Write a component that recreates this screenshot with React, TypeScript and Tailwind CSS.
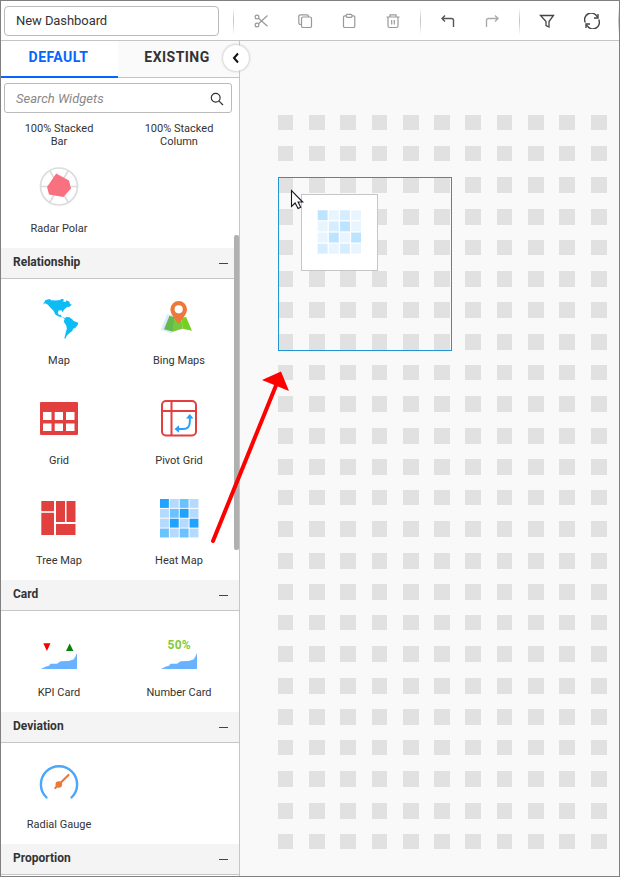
import type { ReactNode } from "react";

const COLUMNS = [
  [278, 15], [309, 16], [340, 16], [372, 15], [403, 16], [434, 16],
  [465, 16], [497, 15], [528, 16], [559, 16], [591, 16],
];
const ROWS = Array.from({ length: 24 }, (_, n) => [
  n === 2 || n === 6 ? Math.floor(115.1 + 31.25 * n) : Math.round(115.1 + 31.25 * n),
  n % 4 === 0 || n === 1 || n === 23 ? 15 : 16,
]);

const HEAT = ["dlml", "lmdl", "ldld", "mlml"];

function HeatCells({ pitch, size, faded = false }: { pitch: number; size: number; faded?: boolean }) {
  const colors: Record<string, string> = faded
    ? { d: "#bce3ff", m: "#d5edff", l: "#e8f5ff" }
    : { d: "#22a2ff", m: "#6ac2ff", l: "#b5daff" };
  return (
    <>
      {HEAT.map((row, y) =>
        row.split("").map((c, x) => (
          <rect key={`${x}-${y}`} x={x * pitch} y={y * pitch} width={size} height={size} fill={colors[c]} />
        ))
      )}
    </>
  );
}

function Icon({ children }: { children: ReactNode }) {
  return (
    <svg width="40" height="40" viewBox="0 0 40 40" fill="none" className="block shrink-0 overflow-visible">
      {children}
    </svg>
  );
}

const Radar = () => (
  <Icon>
    <g stroke="#dcdcdc" strokeWidth="1.7">
      <circle cx="20" cy="19.500" r="18.500" />
      <path d="M1.500 19.500h37M10.700 3.500l18.600 32M29.300 3.500L10.700 35.500" />
    </g>
    <path d="M17.200 6.500L30 13.500l2 8-7.500 8.500-14.500-2.500L8 20z" fill="#f97180" />
  </Icon>
);

const AmericasMap = () => (
  <Icon>
    <path
      transform="translate(0 .5)"
      fill="#0dbcf5"
      d="M4 5l2.500-4.500L11-.4l1 1.200 5 .2 4-.5 2-1.200 2 1-1 1.700 2.500.6 1-1.800 3 1.400.4 2.200 2 .8-2.500 2-2.400.3-3 2.700-1.400 2.600-1-2-3 .2-.8 2.500 1.200 1.900 2.300-.4-.5 1.500 2 1.300 2.200.6 1.500-.9 3 .2 3.200 2.500 1 1.300 4.500 1.800-.5 2.200-2.500 3-2 .8-1 2.300-2.500 2-2.800 2.500-1.700 3.400-.8-1 1.500-6 1-3.500-.9-3.500-2.300-3.200 1-3-2.500-1.500-3.500-.8-3.200-1.700-2-4L8.500 5 6 3.800z"
    />
  </Icon>
);

const BingMap = () => (
  <Icon>
    <g transform="translate(0 1.300)">
      <path d="M8 14L2 29.500l10.500 4 5-19z" fill="#dceafc" />
      <path d="M10.500 15.500L5 29l9 2.500 2-14.500z" fill="#65b94d" />
      <path d="M15.500 17L13.500 31.500l10-3-1-9z" fill="#75ca3b" />
      <path d="M22.500 18l1 10.500 9.500 2-6-14z" fill="#78cf24" />
      <path fillRule="evenodd" d="M19.700.7a8.300 8.300 0 0 1 8.300 8.300c0 5-4.700 9.500-8.300 15-3.600-5.500-8.300-10-8.300-15a8.300 8.300 0 0 1 8.300-8.300zm0 4.200a4.100 4.100 0 1 0 0 8.200 4.100 4.100 0 0 0 0-8.200z" fill="#ec783c" />
    </g>
  </Icon>
);

const GridIcon = () => (
  <Icon>
    <rect x="1" y="3" width="38" height="33" rx="1.200" fill="#e2403e" />
    <g fill="#fff">
      <rect x="4" y="13" width="8.500" height="8" /><rect x="15.700" y="13" width="8.300" height="8" /><rect x="27" y="13" width="8.500" height="8" />
      <rect x="4" y="24.500" width="8.500" height="7.500" /><rect x="15.700" y="24.500" width="8.300" height="7.500" /><rect x="27" y="24.500" width="8.500" height="7.500" />
    </g>
  </Icon>
);

const PivotIcon = () => (
  <Icon>
    <g stroke="#e2403e" strokeWidth="2">
      <rect x="3" y="2" width="34" height="34.500" rx="4" />
      <path d="M12.500 2v34.500M3 12h34" />
    </g>
    <path d="M18.500 30H24c5 0 6.800-2.700 6.800-7v-6" stroke="#22a2ff" strokeWidth="1.900" />
    <path d="M27 19.500l3.800-4.500 3.700 4.500zM20 26.200L15.500 30l4.500 3.800z" fill="#22a2ff" />
  </Icon>
);

const TreeIcon = () => (
  <Icon>
    <g fill="#e2403e">
      <rect x="2.300" y="2" width="12.700" height="10.200" /><rect x="2.300" y="13.800" width="12.700" height="22.200" />
      <rect x="17" y="2" width="9" height="21" /><rect x="27.500" y="2" width="9" height="21" /><rect x="17" y="25" width="19.500" height="11" />
    </g>
  </Icon>
);

const HeatIcon = () => (
  <Icon>
    <g transform="translate(1 0)"><HeatCells pitch={9.850} size={8.900} /></g>
  </Icon>
);

const Area = () => (
  <path d="M2 38L7 35.500l3-.7 1.500-2h6.500l3.500-2.500 8-.2 5-1.500 1.500-2.400 2-4.200v16z" fill="#69b2ff" />
);
const KpiIcon = () => (
  <Icon>
    <path d="M4.300 12.300h7.200L7.900 20z" fill="#f40000" />
    <path d="M27 20h7.400L30.700 12.500z" fill="#078107" />
    <Area />
  </Icon>
);
const NumberIcon = () => (
  <Icon>
    <text x="20.200" y="18" textAnchor="middle" fill="#84c93b" className="font-['Roboto',sans-serif] text-[12px] font-bold tracking-[0.200px]">50%</text>
    <Area />
  </Icon>
);
const GaugeIcon = () => (
  <Icon>
    <path d="M7.500 34.500a18.100 18.100 0 1 1 25 0" stroke="#4ca6fb" strokeWidth="2.400" strokeLinecap="round" />
    <path d="M16.300 25L29.500 12" stroke="#ec783c" strokeWidth="2.200" strokeLinecap="round" />
    <circle cx="19.800" cy="21.500" r="3.300" fill="#ec783c" />
  </Icon>
);

function Widget({ label, icon }: { label: string; icon: ReactNode }) {
  return (
    <div className="flex h-[100px] w-[120px] flex-col items-center pt-[20px]">
      {icon}
      <span className="mt-[15px] whitespace-nowrap text-[11px] leading-[13px]">{label}</span>
    </div>
  );
}

function Section({ title, children }: { title: string; children?: ReactNode }) {
  return (
    <section className="shrink-0">
      <h2 className="flex h-[31px] items-center justify-between border-b border-[#c5c5c5] bg-[#f4f4f4] pl-3 pr-[11px] pb-[2px] text-[12px] font-bold">
        {title}
        <span className="mt-[3px] h-px w-[9px] bg-[#444]" />
      </h2>
      <div className="-ml-[2px] flex w-[240px] flex-wrap pb-px">{children}</div>
    </section>
  );
}

function Tool({ children, className = "w-[44px] text-[#999]" }: { children: ReactNode; className?: string }) {
  return (
    <button className={`flex h-full shrink-0 items-center justify-center ${className}`}>
      <svg width="16" height="16" viewBox="0 0 16 16" fill="none" stroke="currentColor" strokeWidth="1.200">{children}</svg>
    </button>
  );
}
const Divider = () => <span className="h-[28px] w-px shrink-0 bg-linear-to-b from-white via-[#c2c2c2] to-white" />;

export default function App() {
  return (
    <div className="relative flex h-[877px] w-[620px] flex-col overflow-hidden border border-[#808080] bg-white font-['Roboto',sans-serif] text-[#333]">
      <header className="flex h-10 shrink-0 items-center border-b border-[#c5c5c5] pl-[3px]">
        <div className="flex h-[30px] w-[215px] shrink-0 items-center rounded-[4px] border border-[#bbb] pl-[11px] text-[13px] tracking-[-0.070px]">New Dashboard</div>
        <div className="w-[14px] shrink-0" />
        <Divider />
        <div className="w-[5px] shrink-0" />
        <Tool>
          <circle cx="4" cy="4" r="1.900" /><circle cx="4" cy="12" r="1.900" />
          <path d="M5.500 5.300l9 8M5.500 10.700l9-8.200" />
        </Tool>
        <Tool>
          <rect x="4.500" y="4" width="10" height="10.500" rx="1.600" /><path d="M4.300 11.500H3.500a1.700 1.700 0 0 1-1.700-1.700V3.500c0-1 .7-1.700 1.700-1.700h6.300c1 0 1.700.7 1.700 1.700v.5" />
        </Tool>
        <Tool>
          <rect x="2.500" y="2.800" width="11.300" height="11.700" rx="1.300" /><rect x="5.200" y="1.300" width="5.800" height="3" rx="1" fill="white" />
        </Tool>
        <Tool>
          <path d="M1.500 4h13M5 4V1.800h6V4M3 4v9c0 .9.500 1.500 1.500 1.500h7c1 0 1.500-.6 1.500-1.500V4M6.700 7v4.500M9.300 7v4.500" />
        </Tool>
        <div className="w-[5px] shrink-0" />
        <Divider />
        <div className="w-[5px] shrink-0" />
        <Tool className="w-[44px] text-[#555]"><path d="M5 2.500L2 5.500l3 3M2 5.500h9.500c1.300 0 2 .7 2 2V14" strokeWidth="1.400" /></Tool>
        <Tool className="w-[44px] text-[#aaa]"><path d="M11 2.500l3 3-3 3M14 5.500H4.500c-1.300 0-2 .7-2 2V14" strokeWidth="1.400" /></Tool>
        <div className="w-[5px] shrink-0" />
        <Divider />
        <div className="w-[5px] shrink-0" />
        <Tool className="w-[44px] text-[#444]"><path d="M1.500 2.500h13L10 8.500v5.500l-3-1.500v-4z" strokeWidth="1.300" /></Tool>
        <Tool className="w-[45px] text-[#444]"><path d="M1.300 9.500A6.500 6.500 0 0 1 13 3.700M14.700 6.500A6.500 6.500 0 0 1 3 12.300M14 1v4h-4M2 15v-4h4" strokeWidth="1.400" /></Tool>
        <div className="w-[4px] shrink-0" />
        <Divider />
      </header>

      <div className="flex min-h-0 flex-1">
        <aside className="relative flex w-[239px] shrink-0 flex-col border-r border-[#c5c5c5] bg-white">
          <nav className="flex h-[37px] shrink-0 text-[14px] font-bold tracking-[0.450px]">
            <div className="flex w-[117px] items-center justify-center border-b-2 border-[#0565ff] pr-[2px] pb-[2px] text-[#0565ff]">DEFAULT</div>
            <div className="flex flex-1 items-center justify-center border-b border-[#c5c5c5] bg-[#fafafa] pr-[3px] pb-[3px]">EXISTING</div>
          </nav>
          <div className="mx-[3px] mt-[5px] flex h-[30px] w-[228px] shrink-0 items-center justify-between rounded-[3px] border border-[#bbb] pl-[11px] pr-[7px] pt-px text-[13px] italic text-[#888]">
            Search Widgets
            <svg width="14" height="14" viewBox="0 0 14 14" fill="none" stroke="#333" strokeWidth="1.200"><circle cx="5.700" cy="5.700" r="4.400" /><path d="M8.800 8.800l4.200 4.200" /></svg>
          </div>
          <div className="flex min-h-0 flex-1 flex-col overflow-hidden">
            <div className="-ml-[2px] flex h-[34px] w-[240px] shrink-0 pt-[9px] text-center text-[11px] leading-[13px]">
              <span className="w-[120px]">100% Stacked<br />Bar</span>
              <span className="w-[120px]">100% Stacked<br />Column</span>
            </div>
            <div className="-ml-[2px] h-[101px] w-[240px] shrink-0"><Widget label="Radar Polar" icon={<Radar />} /></div>
            <Section title="Relationship">
              <Widget label="Map" icon={<AmericasMap />} />
              <Widget label="Bing Maps" icon={<BingMap />} />
              <Widget label="Grid" icon={<GridIcon />} />
              <Widget label="Pivot Grid" icon={<PivotIcon />} />
              <Widget label="Tree Map" icon={<TreeIcon />} />
              <Widget label="Heat Map" icon={<HeatIcon />} />
            </Section>
            <Section title="Card">
              <Widget label="KPI Card" icon={<KpiIcon />} />
              <Widget label="Number Card" icon={<NumberIcon />} />
            </Section>
            <Section title="Deviation"><Widget label="Radial Gauge" icon={<GaugeIcon />} /></Section>
            <Section title="Proportion" />
          </div>
          <span className="absolute right-0 top-[194px] h-[315px] w-[5px] rounded-[2px] bg-[#b0b0b0]" />
          <button className="absolute -right-[10px] top-[4px] z-10 flex size-[26px] items-center justify-center rounded-full bg-white shadow-[0_0_3px_#aaa]">
            <svg width="12" height="12" viewBox="0 0 12 12" fill="none" stroke="#111" strokeWidth="2"><path d="M8 1.500L4 6l4 4.500" /></svg>
          </button>
        </aside>

        <main className="flex-1 bg-[#f9f9f9]">
          <svg width="379" height="835" viewBox="240 41 379 835" shapeRendering="crispEdges" className="block">
            {ROWS.map(([y, h]) => COLUMNS.map(([x, w]) => <rect key={`${x}-${y}`} x={x} y={y} width={w} height={h} fill="#e1e1e1" />))}
          </svg>
        </main>
      </div>

      <div className="absolute left-[277px] top-[176px] h-[174px] w-[174px] border border-[#1e97d4]" />
      <div className="absolute left-[300px] top-[193px] flex size-[77px] items-center justify-center border border-[#c6c6c6] bg-white">
        <svg width="45" height="45" viewBox="0 0 45 45"><g transform="translate(.7 .3)"><HeatCells pitch={11.150} size={9.900} faded /></g></svg>
      </div>
      <svg className="pointer-events-none absolute -left-px -top-px z-20" width="620" height="877" viewBox="0 0 620 877">
        <path d="M213 541L277 383" stroke="#f00" strokeWidth="4" strokeLinecap="round" />
        <path d="M281 371.500L262 380l27 11z" fill="#f00" />
        <path d="M291.500 190.500v16l3.600-3.500 3 5.500 2.600-1.300-2.600-5.200h4.600z" fill="#fff" stroke="#181824" strokeWidth="1.100" />
      </svg>
    </div>
  );
}
